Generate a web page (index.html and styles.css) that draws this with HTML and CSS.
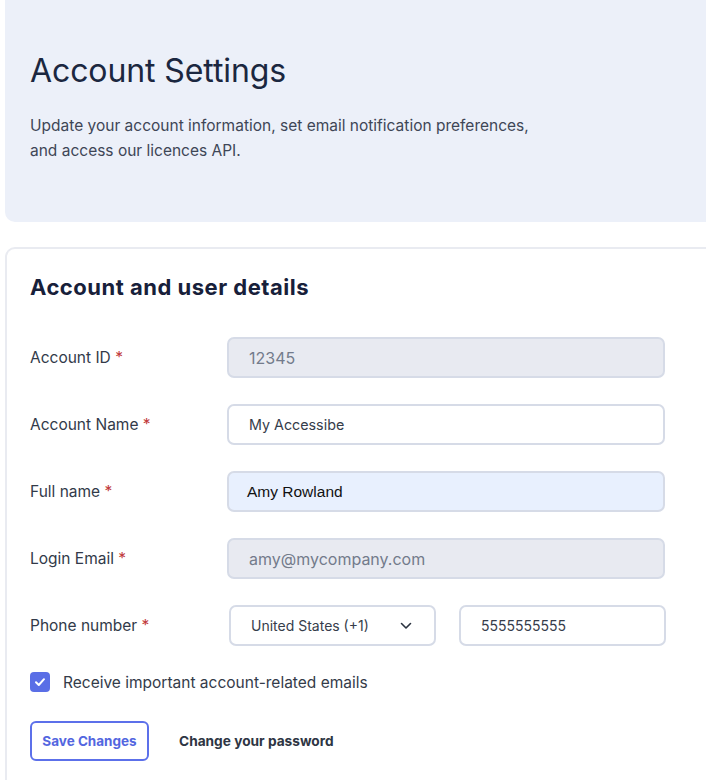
FILE: index.html
```html
<!DOCTYPE html>
<html>
	<head>
		<meta charset="utf-8">
		<title>Account Settings</title>
		<link rel="stylesheet" href="styles.css">
	</head>
	<body>
		<div class="page">
			<header class="intro">
				<h1 class="intro_title">Account Settings</h1>
				<p class="intro_text">Update your account information, set email notification preferences,<br>and access our licences API.</p>
			</header>

			<section class="card">
				<h2 class="card_title">Account and user details</h2>
				<form class="form">
					<div class="row">
						<label class="row_label">Account ID <span class="req">*</span></label>
						<div class="field field_disabled">12345</div>
					</div>
					<div class="row">
						<label class="row_label">Account Name <span class="req">*</span></label>
						<div class="field">My Accessibe</div>
					</div>
					<div class="row">
						<label class="row_label">Full name <span class="req">*</span></label>
						<div class="field field_filled">Amy Rowland</div>
					</div>
					<div class="row">
						<label class="row_label">Login Email <span class="req">*</span></label>
						<div class="field field_disabled">amy@mycompany.com</div>
					</div>
					<div class="row">
						<label class="row_label">Phone number <span class="req">*</span></label>
						<div class="phone">
							<div class="field field_select">
								<span>United States (+1)</span>
								<svg width="12" height="8" viewBox="0 0 12 8"><path d="M1.5 1.5 L6 6 L10.5 1.5" fill="none" stroke="#2b3340" stroke-width="1.6" stroke-linecap="round" stroke-linejoin="round"/></svg>
							</div>
							<div class="field field_phone">5555555555</div>
						</div>
					</div>

					<label class="check">
						<span class="check_box">
							<svg width="12" height="10" viewBox="0 0 12 10"><path d="M2 5.2 L4.8 8 L10 2.2" fill="none" stroke="#fff" stroke-width="2" stroke-linecap="round" stroke-linejoin="round"/></svg>
						</span>
						Receive important account-related emails
					</label>

					<div class="actions">
						<button type="button" class="btn_save">Save Changes</button>
						<a class="link_pass">Change your password</a>
					</div>
				</form>
			</section>
		</div>
	</body>
</html>
```

FILE: styles.css
```css
html, body {
	margin: 0;
	padding: 0;
	overflow: hidden;
	background: #fff;
}

body {
	font-family: Inter, "Noto Sans", sans-serif;
	color: #2d3443;
}

.page {
	width: 760px;
	padding-left: 5px;
}

.intro {
	box-sizing: border-box;
	height: 222px;
	background: #ecf0f9;
	border-radius: 0 0 10px 10px;
	padding: 51px 25px 0;
}

.intro_title {
	margin: 0;
	font-size: 32px;
	font-weight: 400;
	line-height: 40px;
	color: #1b2740;
	letter-spacing: -0.1px;
}

.intro_text {
	margin: 22px 0 0;
	font-size: 15.5px;
	line-height: 25px;
	color: #3e4656;
}

.card {
	margin-top: 25px;
	border: 2px solid #e9ebf1;
	border-right: none;
	border-bottom: none;
	border-radius: 10px 0 0 0;
	padding: 23px 0 30px 23px;
}

.card_title {
	margin: 0;
	font-size: 22px;
	font-weight: 700;
	line-height: 30px;
	color: #17203a;
	letter-spacing: 0.5px;
}

.form {
	margin-top: 35px;
}

.row {
	display: grid;
	grid-template-columns: 197px 438px;
	align-items: center;
	margin-bottom: 26px;
}

.row_label {
	font-size: 15.5px;
	color: #323a49;
}

.req {
	color: #c1383a;
}

.field {
	box-sizing: border-box;
	height: 41px;
	border: 2px solid #d6dbe7;
	border-radius: 7px;
	padding: 0 20px;
	display: flex;
	align-items: center;
	font-size: 14.3px;
	color: #363d4b;
	background: #fff;
}

.field_disabled {
	background: #e8eaf1;
	color: #737b8b;
	font-size: 16px;
}

.field_filled {
	background: #e8f0fe;
	color: #111;
	font-family: "Liberation Sans", Arial, sans-serif;
	font-size: 15.5px;
	padding-left: 18px;
}

.phone {
	display: grid;
	grid-template-columns: 207px 207px;
	gap: 23px;
	margin-left: 2px;
}

.field_select {
	justify-content: space-between;
	padding-right: 22px;
	font-size: 14px;
}

.field_phone {
	font-size: 14px;
}

.check {
	display: flex;
	align-items: center;
	gap: 13px;
	margin-top: 1px;
	font-size: 15.5px;
	color: #343b49;
}

.check_box {
	width: 20px;
	height: 20px;
	border-radius: 4px;
	background: #5a6ee6;
	display: flex;
	align-items: center;
	justify-content: center;
}

.actions {
	display: flex;
	align-items: center;
	gap: 30px;
	margin-top: 29px;
}

.btn_save {
	height: 40px;
	width: 119px;
	padding: 0;
	border: 2px solid #5c70ea;
	border-radius: 6px;
	background: #fff;
	font-family: Inter, sans-serif;
	font-size: 13.5px;
	font-weight: 700;
	color: #5366e0;
}

.link_pass {
	font-size: 13.7px;
	font-weight: 700;
	color: #2e3543;
}
```
